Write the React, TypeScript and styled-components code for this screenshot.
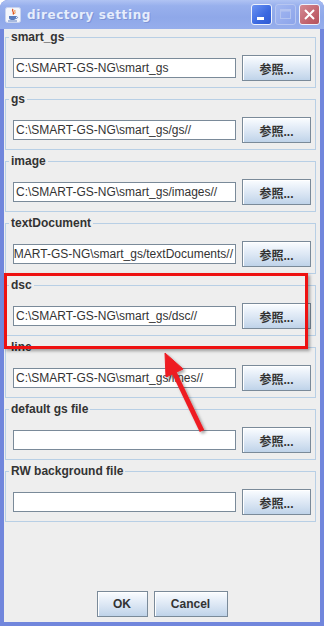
import styled, { createGlobalStyle } from "styled-components";

interface DirGroup {
  title: string;
  path: string;
  scrolled?: boolean;
}

const groups: DirGroup[] = [
  { title: "smart_gs", path: "C:\\SMART-GS-NG\\smart_gs" },
  { title: "gs", path: "C:\\SMART-GS-NG\\smart_gs/gs//" },
  { title: "image", path: "C:\\SMART-GS-NG\\smart_gs/images//" },
  {
    title: "textDocument",
    path: "C:\\SMART-GS-NG\\smart_gs/textDocuments//",
    scrolled: true,
  },
  { title: "dsc", path: "C:\\SMART-GS-NG\\smart_gs/dsc//" },
  { title: "line", path: "C:\\SMART-GS-NG\\smart_gs/lines//" },
  { title: "default gs file", path: "" },
  { title: "RW background file", path: "" },
];

const GlobalStyle = createGlobalStyle`
  html, body {
    margin: 0;
    padding: 0;
    background: #ffffff;
  }
`;

const Window = styled.div`
  position: relative;
  width: 324px;
  height: 626px;
  display: flex;
  flex-direction: column;
  background: #7186dc;
  border-radius: 8px 8px 0 0;
  overflow: hidden;
  font-family: "Liberation Sans", Arial, sans-serif;
`;

const TitleBar = styled.div`
  height: 29px;
  flex-shrink: 0;
  display: flex;
  align-items: center;
  padding: 0 4px 0 5px;
  background: linear-gradient(
    to bottom,
    #b0c3f3 0%,
    #98b0ed 20%,
    #8fa8e9 60%,
    #96aeec 100%
  );
`;

const TitleText = styled.span`
  flex: 1;
  margin-left: 6px;
  font-family: "DejaVu Sans", Verdana, sans-serif;
  font-weight: bold;
  font-size: 12px;
  letter-spacing: 0.6px;
  color: #e6edfc;
  text-shadow: 1px 1px 0 #7d93d6;
`;

const CaptionButton = styled.div<{ $kind: "min" | "max" | "close" }>`
  width: 21px;
  height: 21px;
  margin-left: 3px;
  box-sizing: border-box;
  border-radius: 3px;
  border: 1px solid
    ${(p) => (p.$kind === "max" ? "#b7c6f1" : "#eef2fc")};
  background: ${(p) =>
    p.$kind === "min"
      ? "linear-gradient(135deg, #6c93f3 0%, #3a68e0 60%, #2f5bd4 100%)"
      : p.$kind === "max"
      ? "linear-gradient(135deg, #a3b8f1 0%, #8ca4ea 100%)"
      : "linear-gradient(135deg, #d48a93 0%, #bf5f69 70%, #b4535e 100%)"};
  display: flex;
  align-items: center;
  justify-content: center;
`;

const Client = styled.div`
  flex: 1;
  margin: 0 4px 4px 4px;
  background: #eeeeee;
  display: flex;
  flex-direction: column;
`;

const GroupList = styled.div`
  padding-top: 1px;
  display: flex;
  flex-direction: column;
  gap: 4px;
`;

const Group = styled.fieldset`
  margin: 0 4px 0 1px;
  padding: 11px 4px 6px 7px;
  min-width: 0;
  border: 1px solid #b8cfe5;
  border-radius: 0;
`;

const GroupTitle = styled.legend`
  margin-left: -4px;
  padding: 0 2px;
  font-size: 12px;
  line-height: 14px;
  font-weight: bold;
  color: #333333;
`;

const Row = styled.div`
  display: flex;
  align-items: center;
  gap: 6px;
  height: 26px;
`;

const PathField = styled.div<{ $scrolled?: boolean }>`
  flex: 1;
  min-width: 0;
  height: 20px;
  box-sizing: border-box;
  border: 1px solid #7a8a99;
  background: #ffffff;
  display: flex;
  align-items: center;
  justify-content: ${(p) => (p.$scrolled ? "flex-end" : "flex-start")};
  padding: 0 2px;
  overflow: hidden;
  white-space: nowrap;
  font-size: 12px;
  color: #333333;
`;

const Button = styled.button<{ $width: number }>`
  width: ${(p) => p.$width}px;
  height: 26px;
  box-sizing: border-box;
  padding: 0;
  border: 1px solid #7a8a99;
  border-radius: 0;
  background: linear-gradient(
    to bottom,
    #fbfdff 0%,
    #e6eef8 35%,
    #cfdeef 75%,
    #bfd3e9 100%
  );
  box-shadow: inset 1px 1px 0 #ffffff;
  font-family: "Liberation Sans", "Noto Sans CJK JP", sans-serif;
  font-weight: bold;
  font-size: 12px;
  color: #333333;
  flex-shrink: 0;
`;

const Footer = styled.div`
  flex: 1;
  display: flex;
  align-items: flex-end;
  justify-content: center;
  gap: 6px;
  padding-bottom: 5px;
`;

const Highlight = styled.div`
  position: absolute;
  left: 4px;
  top: 273px;
  width: 304px;
  height: 76px;
  box-sizing: border-box;
  border: 3px solid #ee1111;
  box-shadow: 2px 2px 3px rgba(0, 0, 0, 0.35);
`;

const ArrowOverlay = styled.svg`
  position: absolute;
  left: 150px;
  top: 340px;
  width: 70px;
  height: 100px;
  overflow: visible;
`;

function JavaIcon() {
  return (
    <svg width="16" height="16" viewBox="0 0 16 16">
      <rect x="0.5" y="0.5" width="15" height="15" rx="2" fill="#f4f6fc" stroke="#c9d3ef" />
      <path d="M8 2 C6 4 10 5 8 7.5" stroke="#e0521c" strokeWidth="1.3" fill="none" />
      <path d="M10 3 C9 4.5 11 5 9.5 7" stroke="#f08a30" strokeWidth="1" fill="none" />
      <path d="M4 9 H11 V11 C11 12.5 9.5 13 7.5 13 C5.5 13 4 12.5 4 11 Z" fill="#5a7dbf" />
      <path d="M11 9.5 C13 9.5 13 11.5 11 11.5" stroke="#5a7dbf" strokeWidth="1" fill="none" />
      <rect x="3" y="13.5" width="9" height="1" fill="#5a7dbf" />
    </svg>
  );
}

export default function App() {
  return (
    <>
      <GlobalStyle />
      <Window>
        <TitleBar>
          <JavaIcon />
          <TitleText>directory setting</TitleText>
          <CaptionButton $kind="min">
            <svg width="19" height="19" viewBox="0 0 19 19">
              <rect x="5" y="12" width="7" height="3" fill="#ffffff" />
            </svg>
          </CaptionButton>
          <CaptionButton $kind="max">
            <svg width="19" height="19" viewBox="0 0 19 19">
              <rect x="4.5" y="4.5" width="10" height="9" fill="none" stroke="#b3c3f0" />
              <rect x="4.5" y="4.5" width="10" height="2" fill="#b3c3f0" />
            </svg>
          </CaptionButton>
          <CaptionButton $kind="close">
            <svg width="19" height="19" viewBox="0 0 19 19">
              <path d="M5 5 L14 14 M14 5 L5 14" stroke="#ffffff" strokeWidth="2" />
            </svg>
          </CaptionButton>
        </TitleBar>
        <Client>
          <GroupList>
            {groups.map((g) => (
              <Group key={g.title}>
                <GroupTitle>{g.title}</GroupTitle>
                <Row>
                  <PathField $scrolled={g.scrolled}>
                    <span>{g.path}</span>
                  </PathField>
                  <Button $width={69}>参照...</Button>
                </Row>
              </Group>
            ))}
          </GroupList>
          <Footer>
            <Button $width={51}>OK</Button>
            <Button $width={74}>Cancel</Button>
          </Footer>
        </Client>
        <Highlight />
        <ArrowOverlay viewBox="0 0 70 100">
          <defs>
            <filter id="arrowShadow" x="-30%" y="-30%" width="160%" height="160%">
              <feDropShadow dx="2" dy="2" stdDeviation="1.5" floodColor="#000" floodOpacity="0.35" />
            </filter>
          </defs>
          <g filter="url(#arrowShadow)" fill="#ee1c24" stroke="#ee1c24">
            <line x1="23" y1="30" x2="52" y2="91" strokeWidth="5" />
            <polygon points="15,13 33,29 16,37" strokeWidth="1" strokeLinejoin="round" />
          </g>
        </ArrowOverlay>
      </Window>
    </>
  );
}
